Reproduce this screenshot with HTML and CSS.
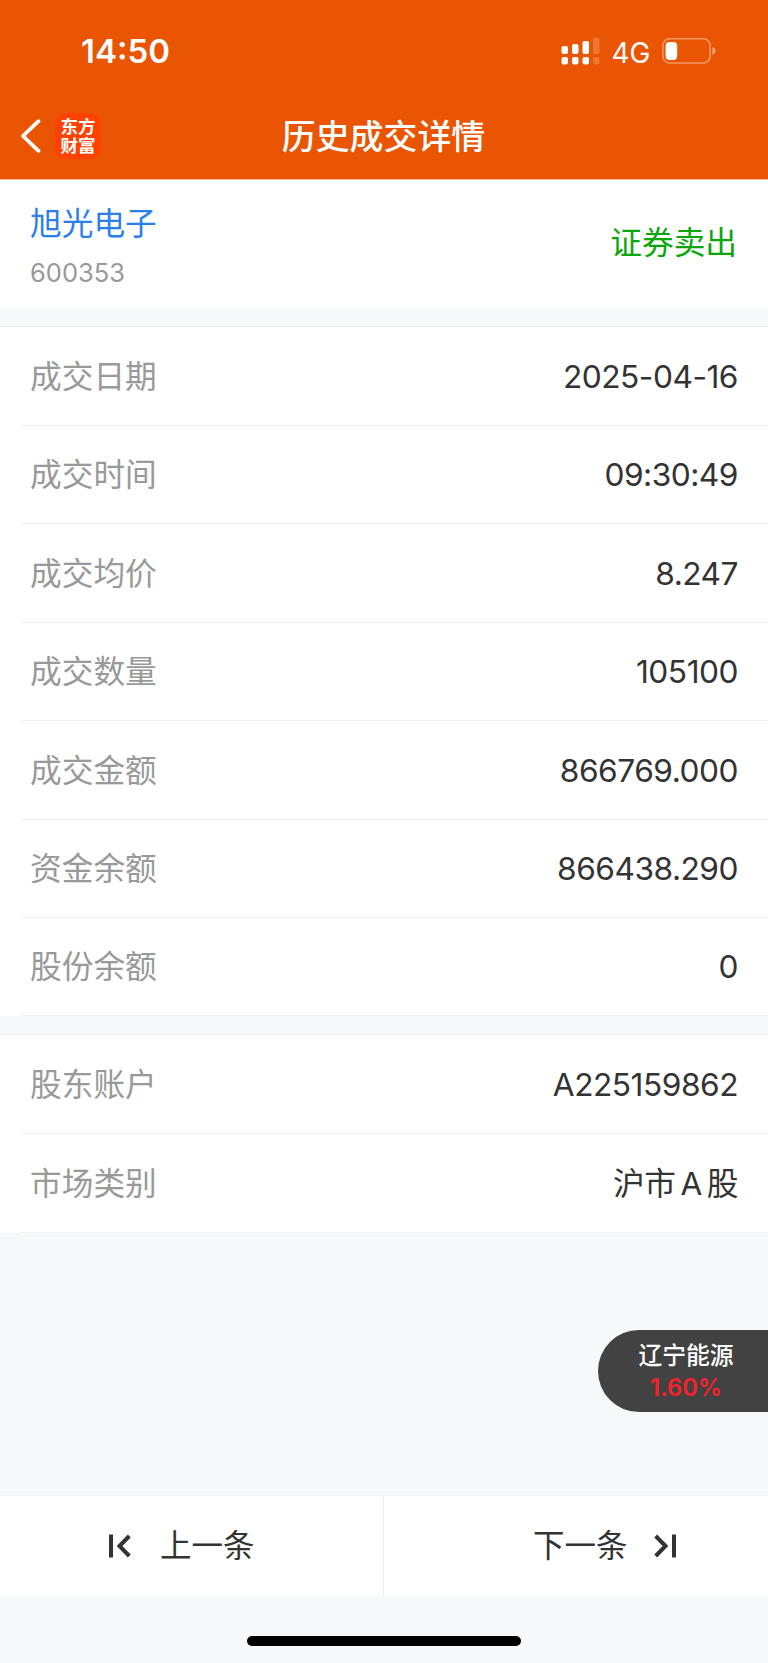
FILE: index.html
```html
<!DOCTYPE html>
<html lang="zh-CN">
<head>
    <meta charset="UTF-8">
    <meta name="viewport" content="width=device-width, initial-scale=1.0">
    <title>历史成交详情</title>
    <link rel="stylesheet" href="styles.css">
</head>
<body>
<!-- Header -->
<header class="header">
    <div class="status-bar">
        <span class="time">14:50</span>
        <div class="status-icons">
            <svg class="signal" width="40" height="28" viewBox="0 0 40 28" fill="#fff">
                <rect x="0.5" y="9" width="6.5" height="8" rx="2"/>
                <rect x="11" y="7" width="6.5" height="10" rx="2"/>
                <rect x="21.5" y="4" width="6.5" height="13" rx="2"/>
                <rect x="32" y="0.5" width="6.5" height="16.5" rx="2" opacity="0.2"/>
                <rect x="0.5" y="20" width="6.5" height="7.5" rx="2"/>
                <rect x="11" y="20" width="6.5" height="7.5" rx="2"/>
                <rect x="21.5" y="20" width="6.5" height="7.5" rx="2"/>
                <rect x="32" y="20" width="6.5" height="7.5" rx="2" opacity="0.2"/>
            </svg>
            <span class="network">4G</span>
            <svg class="battery" width="54" height="26" viewBox="0 0 54 26">
                <rect x="0.8" y="0.8" width="47.4" height="24.2" rx="7" fill="none" stroke="#fff" stroke-opacity="0.4" stroke-width="1.6"/>
                <rect x="3.6" y="4" width="11.6" height="18" rx="4" fill="#fff"/>
                <path d="M50.5 9 Q53.6 10.6 53.6 13 Q53.6 15.4 50.5 17 Z" fill="#fff" fill-opacity="0.5"/>
            </svg>
        </div>
    </div>
    <div class="nav-bar">
        <div class="nav-left">
            <svg class="back" width="20" height="34" viewBox="0 0 20 34" fill="none" stroke="#fff" stroke-width="3.8" stroke-linecap="round" stroke-linejoin="round">
                <path d="M17.5 2.2 L2 17 L17.5 31.8"/>
            </svg>
            <div class="logo">
                <span>东方</span>
                <span>财富</span>
            </div>
        </div>
        <h1 class="title">历史成交详情</h1>
    </div>
</header>

<!-- Stock info -->
<section class="stock">
    <div>
        <div class="stock-name">旭光电子</div>
        <div class="stock-code">600353</div>
    </div>
    <div class="trade-type">证券卖出</div>
</section>

<!-- Trade details -->
<section class="list list-trade">
    <div class="row"><span class="label">成交日期</span><span class="value">2025-04-16</span></div>
    <div class="row"><span class="label">成交时间</span><span class="value">09:30:49</span></div>
    <div class="row"><span class="label">成交均价</span><span class="value">8.247</span></div>
    <div class="row"><span class="label">成交数量</span><span class="value">105100</span></div>
    <div class="row"><span class="label">成交金额</span><span class="value">866769.000</span></div>
    <div class="row"><span class="label">资金余额</span><span class="value">866438.290</span></div>
    <div class="row"><span class="label">股份余额</span><span class="value">0</span></div>
</section>

<!-- Account details -->
<section class="list list-account">
    <div class="row"><span class="label">股东账户</span><span class="value">A225159862</span></div>
    <div class="row"><span class="label">市场类别</span><span class="value">沪市<span class="latin">A</span>股</span></div>
</section>

<!-- Floating quote -->
<div class="quote">
    <div class="quote-name">辽宁能源</div>
    <div class="quote-change">1.60%</div>
</div>

<!-- Previous / next -->
<footer class="footer">
    <div class="pager">
        <div class="pager-item prev">
            <svg width="22" height="24" viewBox="0 0 22 24" fill="none" stroke="#333" stroke-width="4">
                <path d="M2 0.5 V23.5"/>
                <path d="M20.3 2 L10.5 12 L20.3 22"/>
            </svg>
            <span>上一条</span>
        </div>
        <div class="pager-item next">
            <span>下一条</span>
            <svg width="22" height="24" viewBox="0 0 22 24" fill="none" stroke="#333" stroke-width="4">
                <path d="M1.7 2 L11.5 12 L1.7 22"/>
                <path d="M20 0.5 V23.5"/>
            </svg>
        </div>
    </div>
    <div class="home-bar"></div>
</footer>
</body>
</html>
```

FILE: styles.css
```css
* {
    box-sizing: border-box;
}

body {
    display: flex;
    flex-direction: column;
    height: 1663px;
    margin: 0;
    background-color: #f6f8fa;
    color: #333;
    font-family: Inter, "Noto Sans CJK SC", sans-serif;
    font-size: 31.7px;
    line-height: 1;
}

/* Header */
.header {
    height: 180px;
    background-color: #ea5504;
    border-bottom: 1px solid #f8b995;
    color: #fff;
}

.status-bar {
    display: flex;
    justify-content: space-between;
    align-items: center;
    height: 93px;
    padding: 10px 52px 0 81px;
}

.time {
    font-size: 33px;
    font-weight: 600;
}

.status-icons {
    display: flex;
    align-items: center;
}

.signal {
    margin-top: -1px;
}

.network {
    margin: 2px 12px 0 11px;
    font-size: 28px;
    letter-spacing: -0.3px;
}

.battery {
    margin-top: -1px;
}

.nav-bar {
    display: grid;
    grid-template-columns: 1fr auto 1fr;
    align-items: center;
    height: 86px;
    padding: 0 21px;
}

.nav-left {
    display: flex;
    align-items: center;
    gap: 14px;
}

.logo {
    display: flex;
    flex-direction: column;
    align-items: center;
    width: 46px;
    height: 46px;
    padding-top: 3px;
    border-radius: 10px;
    background-color: #ff4200;
    font-family: "Noto Sans CJK SC", sans-serif;
    font-size: 17.5px;
    font-weight: 700;
    line-height: 19px;
}

.title {
    margin: 2px 1px 0 0;
    font-size: 33.9px;
    font-weight: 500;
}

/* Stock info */
.stock {
    display: flex;
    justify-content: space-between;
    align-items: center;
    height: 127px;
    padding: 0 31px 0 30px;
    background-color: #fff;
}

.stock-name {
    margin-top: 6px;
    color: #2a7fe8;
}

.stock-code {
    margin-top: 20px;
    color: #999;
    font-size: 25.5px;
}

.trade-type {
    margin-top: -2px;
    color: #0aa60a;
}

/* Detail lists */
.list {
    padding: 0.6px 0 0 20px;
    border-top: 1px solid #ebedee;
    background-color: #fff;
}

.list-trade {
    margin-top: 19px;
}

.list-account {
    margin-top: 18px;
}

.row {
    display: flex;
    justify-content: space-between;
    align-items: center;
    height: 98.4px;
    padding: 1px 30px 0 10px;
    border-bottom: 1px solid #f0f1f2;
}

.label {
    color: #999;
}

.value {
    letter-spacing: -0.5px;
}

.latin {
    margin: 0 5px;
}

/* Floating quote */
.quote {
    position: absolute;
    top: 1329.5px;
    right: 0;
    width: 170px;
    height: 82.5px;
    padding: 14px 34px 0 40px;
    border-radius: 41px 0 0 41px;
    background-color: #424242;
    color: #fff;
    text-align: center;
    white-space: nowrap;
}

.quote-name {
    font-size: 23.8px;
    font-weight: 500;
}

.quote-change {
    margin-top: 9px;
    color: #f5222d;
    font-size: 23.8px;
    font-weight: 600;
}

/* Footer */
.footer {
    margin-top: auto;
    height: 168px;
}

.pager {
    display: flex;
    height: 100px;
    border-top: 1px solid #f0f1f2;
    background-color: #fff;
}

.pager-item {
    display: flex;
    align-items: center;
    width: 50%;
    gap: 29px;
    font-size: 31.5px;
}

.prev {
    padding-left: 109px;
    border-right: 1px solid #ebedee;
}

.next {
    padding-left: 149px;
    gap: 26px;
}

.home-bar {
    width: 274px;
    height: 10px;
    margin: 41px auto 0;
    border-radius: 5px;
    background-color: #000;
}
```
